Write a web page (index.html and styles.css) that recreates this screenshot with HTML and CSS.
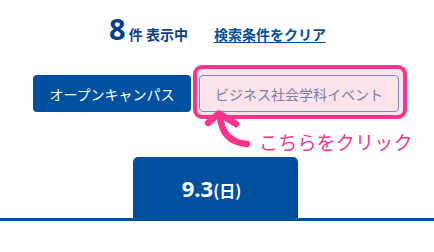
FILE: index.html
```html
<!DOCTYPE html>
<html lang="ja">
<head>
<meta charset="utf-8">
<link rel="stylesheet" href="styles.css">
</head>
<body>
<div class="page">
  <div class="summary">
    <p class="count"><span class="num">8</span><span class="unit">件 表示中</span></p>
    <a class="clear" href="#">検索条件をクリア</a>
  </div>
  <div class="filters">
    <button class="chip chip-on">オープンキャンパス</button>
    <div class="callout">
      <button class="chip chip-off">ビジネス社会学科イベント</button>
      <svg class="arrow" width="60" height="42" viewBox="0 0 60 42">
        <path d="M9 14 L20 4.5 L37 15" fill="none" stroke="#f7358f" stroke-width="6.5" stroke-linecap="round" stroke-linejoin="round"/>
        <path d="M21 7 Q23 33 48 35" fill="none" stroke="#f7358f" stroke-width="6.5" stroke-linecap="round"/>
      </svg>
      <span class="hint">こちらをクリック</span>
    </div>
  </div>
  <div class="tabs">
    <div class="tab"><span class="date">9.3</span><span class="dow">(日)</span></div>
  </div>
</div>
</body>
</html>
```
FILE: styles.css
```css
* { box-sizing: border-box; }
html, body { margin: 0; padding: 0; background: #fff; }
body {
  font-family: "Noto Sans CJK JP", "Noto Sans", sans-serif;
  color: #0050a0;
  width: 434px;
  height: 252px;
  overflow: hidden;
}
.summary {
  display: flex;
  justify-content: center;
  align-items: baseline;
  gap: 26px;
  padding-top: 14px;
  padding-left: 1px;
}
.count { margin: 0; line-height: 1; display: flex; align-items: baseline; }
.num { font-size: 29px; font-weight: 700; font-family: "Noto Sans", sans-serif; line-height: 1; margin-right: 3px; color: #0a3f86; }
.unit { font-size: 14px; font-weight: 700; line-height: 1; color: #0a3f86; }
.clear {
  font-size: 14px;
  font-weight: 700;
  line-height: 1;
  color: #0050a0;
  text-decoration: underline;
  text-underline-offset: 2px;
  text-decoration-thickness: 1px;
}
.filters {
  display: flex;
  gap: 8px;
  padding-left: 33px;
  margin-top: 32px;
}
.chip {
  height: 37px;
  border-radius: 4px;
  font-family: "Noto Sans CJK JP", sans-serif;
  font-size: 14px;
  line-height: 1;
  padding: 0;
  display: flex;
  align-items: center;
  justify-content: center;
}
.chip-on {
  width: 158px;
  background: #0050a0;
  color: #fff;
  border: none;
}
.chip-off {
  width: 200px;
  background: #fde3ea;
  color: #7a7ea8;
  border: 1.5px solid #7d86c4;
}
.callout { position: relative; z-index: 0; isolation: isolate; }
.callout::before {
  content: "";
  position: absolute;
  top: -10px;
  left: -6px;
  right: -8px;
  bottom: -7px;
  border: 4px solid #f7358f;
  border-radius: 9px;
  background: #fde3ea;
  z-index: -1;
}
.arrow {
  position: absolute;
  left: 0;
  top: 34px;
}
.hint {
  position: absolute;
  left: 60px;
  top: 57px;
  font-size: 19px;
  line-height: 1;
  color: #f7358f;
  white-space: nowrap;
  letter-spacing: 0.2px;
}
.tabs {
  margin-top: 45px;
  border-bottom: 3px solid #0050a0;
  padding-left: 133px;
  display: flex;
}
.tab {
  width: 165px;
  height: 61px;
  background: #0050a0;
  border-radius: 5px 5px 0 0;
  color: #fff;
  font-weight: 700;
  font-family: "Noto Sans", "Noto Sans CJK JP", sans-serif;
  display: flex;
  align-items: baseline;
  justify-content: center;
  padding-top: 20px;
  padding-right: 8px;
}
.date { font-size: 22px; line-height: 1; }
.dow { font-size: 16px; line-height: 1; font-family: "Noto Sans CJK JP", sans-serif; }
```
